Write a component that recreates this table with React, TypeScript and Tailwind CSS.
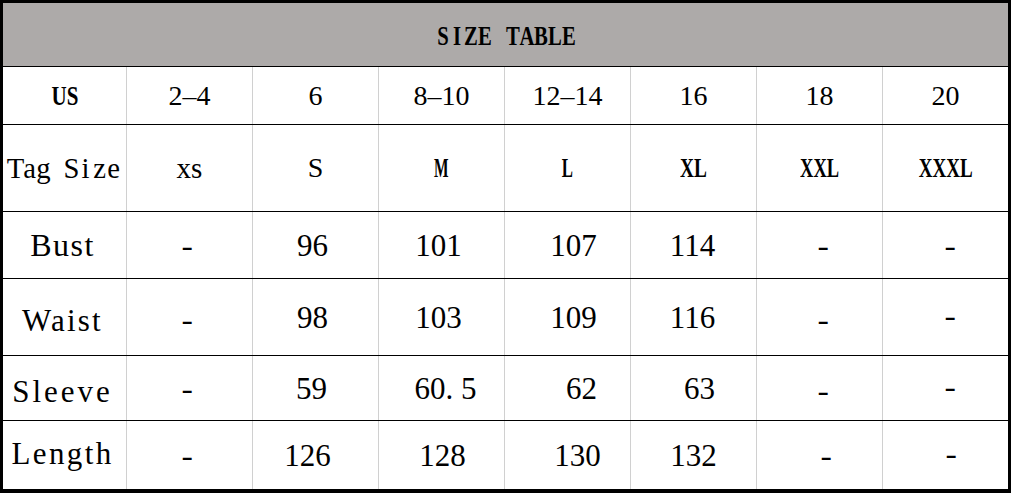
const serif = "font-['Liberation_Serif',serif]";

type Cell = { text: string; cls: string };

// fixed pitch letters, to get the look of the monospaced original
function Mono({ text, pitch, cls }: { text: string; pitch: string; cls: string }) {
  return (
    <span className="inline-flex">
      {[...text].map((ch, i) => (
        <span key={i} className={`inline-flex justify-center ${pitch} ${cls}`}>
          {ch === " " ? "\u00a0" : ch}
        </span>
      ))}
    </span>
  );
}

const usRow: Cell[] = [
  { text: "2–4", cls: `${serif} text-[28px]` },
  { text: "6", cls: `${serif} text-[28px]` },
  { text: "8–10", cls: `${serif} text-[28px]` },
  { text: "12–14", cls: `${serif} text-[28px]` },
  { text: "16", cls: `${serif} text-[28px]` },
  { text: "18", cls: `${serif} text-[28px]` },
  { text: "20", cls: `${serif} text-[28px]` },
];

const letter = `${serif} font-bold text-[28px]`;
const tagRow: Cell[] = [
  { text: "xs", cls: `${serif} text-[29px]` },
  { text: "S", cls: `${serif} text-[28px]` },
  { text: "M", cls: `${letter} scale-x-[0.55]` },
  { text: "L", cls: `${letter} scale-x-[0.6]` },
  { text: "XL", cls: `${letter} scale-x-[0.69]` },
  { text: "XXL", cls: `${letter} scale-x-[0.66]` },
  { text: "XXXL", cls: `${letter} scale-x-[0.68]` },
];

const num = `${serif} text-[31px]`;
const dash = `${serif} text-[31px] scale-x-[1.1]`;

const body: { label: string; labelCls: string; h: string; cells: Cell[] }[] = [
  {
    label: "Bust",
    labelCls: "text-[32px] tracking-[1.5px]",
    h: "h-[67px]",
    cells: [
      { text: "-", cls: `${dash} -translate-x-[2px]` },
      { text: "96", cls: `${num} -translate-x-[3px]` },
      { text: "101", cls: `${num} -translate-x-[3px]` },
      { text: "107", cls: `${num} translate-x-[6px]` },
      { text: "114", cls: `${num} -translate-x-[1px]` },
      { text: "-", cls: `${dash} translate-x-[4px]` },
      { text: "-", cls: `${dash} translate-x-[5px]` },
    ],
  },
  {
    label: "Waist",
    labelCls: "text-[31px] tracking-[2.2px] translate-y-[3px]",
    h: "h-[77px]",
    cells: [
      { text: "-", cls: `${dash} -translate-x-[2px] translate-y-[2px]` },
      { text: "98", cls: `${num} -translate-x-[3px]` },
      { text: "103", cls: `${num} -translate-x-[3px]` },
      { text: "109", cls: `${num} translate-x-[6px]` },
      { text: "116", cls: `${num} -translate-x-[1px]` },
      { text: "-", cls: `${dash} translate-x-[4px] translate-y-[2px]` },
      { text: "-", cls: `${dash} translate-x-[5px] -translate-y-[2px]` },
    ],
  },
  {
    label: "Sleeve",
    labelCls: "text-[31px] tracking-[3px] translate-y-[3px]",
    h: "h-[65px]",
    cells: [
      { text: "-", cls: `${dash} -translate-x-[2px]` },
      { text: "59", cls: `${num} -translate-x-[4px]` },
      { text: "60. 5", cls: `${num} translate-x-[4px]` },
      { text: "62", cls: `${num} translate-x-[14px]` },
      { text: "63", cls: `${num} translate-x-[6px]` },
      { text: "-", cls: `${dash} translate-x-[4px] translate-y-[2px]` },
      { text: "-", cls: `${dash} translate-x-[5px] -translate-y-[2px]` },
    ],
  },
  {
    label: "Length",
    labelCls: "text-[31px] tracking-[2.4px] -translate-y-[2px]",
    h: "h-[68px]",
    cells: [
      { text: "-", cls: `${dash} -translate-x-[2px]` },
      { text: "126", cls: `${num} -translate-x-[8px]` },
      { text: "128", cls: `${num} translate-x-[1px]` },
      { text: "130", cls: `${num} translate-x-[10px]` },
      { text: "132", cls: `${num}` },
      { text: "-", cls: `${dash} translate-x-[7px]` },
      { text: "-", cls: `${dash} translate-x-[6px] -translate-y-[2px]` },
    ],
  },
];

function Row({ label, h, cells, last }: { label: React.ReactNode; h: string; cells: Cell[]; last?: boolean }) {
  return (
    <div className={`grid grid-cols-[123px_repeat(7,126px)] ${h} ${last ? "" : "border-b border-black"}`}>
      <div className="flex items-center justify-center">{label}</div>
      {cells.map((c, i) => (
        <div key={i} className="flex items-center justify-center border-l border-[#d0d0d0]">
          <span className={`inline-block leading-none whitespace-pre ${c.cls}`}>{c.text}</span>
        </div>
      ))}
    </div>
  );
}

export default function App() {
  return (
    <div className="w-[1011px] h-[493px] bg-white text-black border-t-[3px] border-l-[3px] border-r-[3px] border-b-[4px] border-black">
      <div className="h-[64px] bg-[#adaaa9] border-b border-black flex items-center justify-center pt-[3px]">
        <Mono text="SIZE TABLE" pitch="w-[14px]" cls={`${serif} font-bold text-[26.5px] leading-none scale-x-[0.78]`} />
      </div>
      <Row
        label={<span className={`inline-block leading-none font-bold text-[28px] scale-x-[0.75] ${serif}`}>US</span>}
        h="h-[58px]"
        cells={usRow}
      />
      <Row
        label={<Mono text="Tag Size" pitch="w-[14px]" cls={`${serif} text-[28.7px] leading-none`} />}
        h="h-[87px]"
        cells={tagRow}
      />
      {body.map((r, i) => (
        <Row
          key={r.label}
          label={
            <span className={`inline-block leading-none whitespace-pre -translate-x-[2px] ${serif} ${r.labelCls}`}>
              {r.label}
            </span>
          }
          h={r.h}
          cells={r.cells}
          last={i === body.length - 1}
        />
      ))}
    </div>
  );
}
